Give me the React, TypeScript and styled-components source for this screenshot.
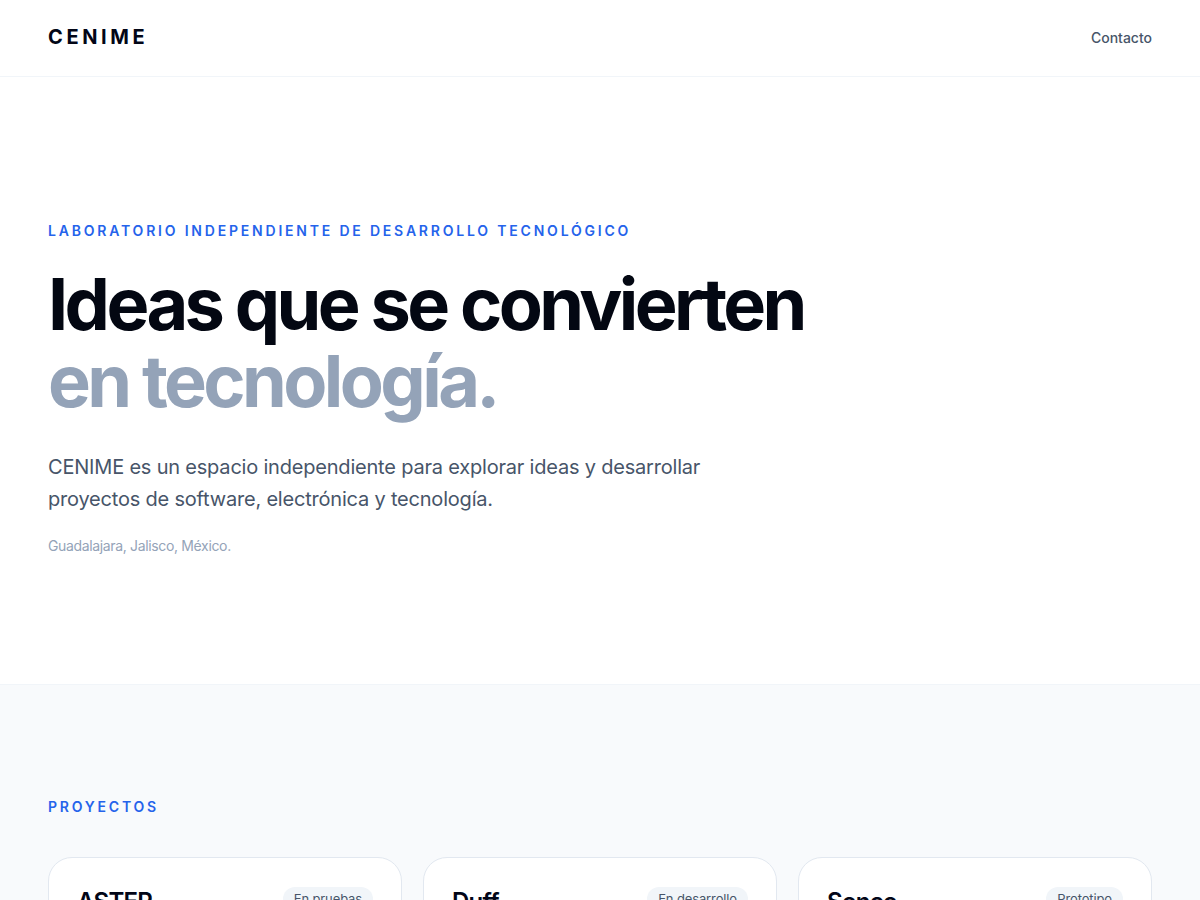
import styled, { createGlobalStyle } from 'styled-components';

const GlobalStyle = createGlobalStyle`
  * {
    box-sizing: border-box;
  }
  body {
    margin: 0;
    background: #ffffff;
    font-family: Inter, 'Noto Sans', Arial, sans-serif;
    color: #0f172a;
    -webkit-font-smoothing: antialiased;
  }
  h1, h2, h3, p {
    margin: 0;
  }
`;

const Header = styled.header`
  height: 77px;
  border-bottom: 1px solid #f1f5f9;
  background: #ffffff;
`;

const Container = styled.div`
  max-width: 1200px;
  margin: 0 auto;
  padding: 0 48px;
`;

const HeaderInner = styled(Container)`
  height: 100%;
  display: flex;
  align-items: center;
  justify-content: space-between;
  padding-bottom: 2px;
`;

const Logo = styled.a`
  font-size: 20px;
  font-weight: 700;
  letter-spacing: 0.18em;
  color: #020617;
  text-decoration: none;
`;

const NavLink = styled.a`
  font-size: 14px;
  font-weight: 500;
  color: #475569;
  text-decoration: none;
`;

const Hero = styled.section`
  padding: 144px 0 128px;
  border-bottom: 1px solid #f1f5f9;
`;

const Eyebrow = styled.p`
  font-size: 14px;
  line-height: 20px;
  font-weight: 600;
  letter-spacing: 0.2em;
  text-transform: uppercase;
  color: #2563eb;
`;

const Title = styled.h1`
  margin-top: 24px;
  font-size: 72px;
  line-height: 77px;
  font-weight: 700;
  letter-spacing: -0.05em;
  color: #030712;
`;

const Muted = styled.span`
  display: block;
  color: #94a3b8;
`;

const Lead = styled.p`
  margin-top: 32px;
  max-width: 700px;
  font-size: 20px;
  line-height: 32px;
  letter-spacing: -0.01em;
  color: #475569;
`;

const Location = styled.p`
  margin-top: 21px;
  font-size: 14px;
  line-height: 20px;
  letter-spacing: -0.025em;
  color: #94a3b8;
`;

const Projects = styled.section`
  background: #f8fafc;
  padding: 112px 0 112px;
`;

const SectionLabel = styled.h2`
  font-size: 14px;
  line-height: 20px;
  font-weight: 600;
  letter-spacing: 0.2em;
  text-transform: uppercase;
  color: #2563eb;
`;

const Grid = styled.div`
  margin-top: 40px;
  display: grid;
  grid-template-columns: repeat(3, 1fr);
  gap: 21px;
`;

const Card = styled.article`
  background: #ffffff;
  border: 1px solid #e2e8f0;
  border-radius: 24px;
  padding: 28px;
  min-height: 260px;
`;

const CardTop = styled.div`
  display: flex;
  align-items: flex-start;
  justify-content: space-between;
  gap: 16px;
`;

const CardTitle = styled.h3`
  font-size: 24px;
  line-height: 32px;
  font-weight: 600;
  letter-spacing: -0.03em;
  color: #020617;
`;

const Badge = styled.span`
  margin-top: 1px;
  padding: 3px 11px;
  border-radius: 999px;
  background: #f1f5f9;
  font-size: 13px;
  line-height: 18px;
  letter-spacing: -0.01em;
  color: #475569;
  white-space: nowrap;
`;

const CardText = styled.p`
  margin-top: 16px;
  font-size: 15px;
  line-height: 24px;
  color: #64748b;
`;

const projects = [
  {
    name: 'ASTER',
    status: 'En pruebas',
    text: 'Plataforma de software para organizar y automatizar procesos.',
  },
  {
    name: 'Duff',
    status: 'En desarrollo',
    text: 'Herramienta experimental para el desarrollo de aplicaciones.',
  },
  {
    name: 'Sonco',
    status: 'Prototipo',
    text: 'Proyecto de electrónica y sensores para el monitoreo de datos.',
  },
];

export default function App() {
  return (
    <>
      <GlobalStyle />
      <Header>
        <HeaderInner>
          <Logo href="#">CENIME</Logo>
          <NavLink href="#">Contacto</NavLink>
        </HeaderInner>
      </Header>
      <main>
        <Hero>
          <Container>
            <Eyebrow>Laboratorio independiente de desarrollo tecnológico</Eyebrow>
            <Title>
              Ideas que se convierten
              <Muted>en tecnología.</Muted>
            </Title>
            <Lead>
              CENIME es un espacio independiente para explorar ideas y desarrollar
              proyectos de software, electrónica y tecnología.
            </Lead>
            <Location>Guadalajara, Jalisco, México.</Location>
          </Container>
        </Hero>
        <Projects>
          <Container>
            <SectionLabel>Proyectos</SectionLabel>
            <Grid>
              {projects.map((p) => (
                <Card key={p.name}>
                  <CardTop>
                    <CardTitle>{p.name}</CardTitle>
                    <Badge>{p.status}</Badge>
                  </CardTop>
                  <CardText>{p.text}</CardText>
                </Card>
              ))}
            </Grid>
          </Container>
        </Projects>
      </main>
    </>
  );
}
